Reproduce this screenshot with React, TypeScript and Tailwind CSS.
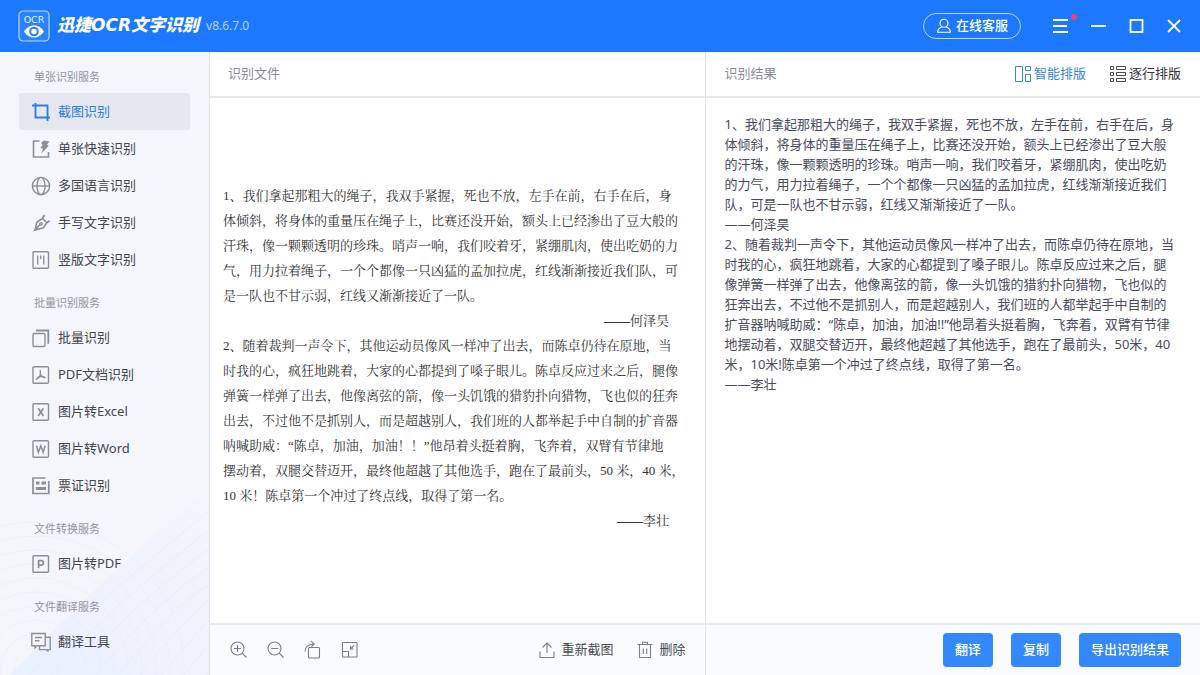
import { useState } from "react";
import type { ReactNode } from "react";

interface NavItem {
  label: string;
  icon: ReactNode;
}

interface NavGroup {
  title: string;
  items: NavItem[];
}

const Icon = ({ children, className = "size-5" }: { children: ReactNode; className?: string }) => (
  <svg
    viewBox="0 0 20 20"
    fill="none"
    stroke="currentColor"
    strokeWidth="1.4"
    className={`shrink-0 ${className}`}
    aria-hidden="true"
  >
    {children}
  </svg>
);

const Page = () => <rect x="2" y="1.7" width="15.5" height="16.6" rx="1" />;

const groups: NavGroup[] = [
  {
    title: "单张识别服务",
    items: [
      {
        label: "截图识别",
        icon: (
          <Icon>
            <path strokeWidth="1.9" d="M1 3.5h15.5v12M4.5 1v14.5H17M16.5 15v4M15 15.5h4" />
          </Icon>
        ),
      },
      {
        label: "单张快速识别",
        icon: (
          <Icon>
            <path d="M8.5 2H2.5v16h15v-5" strokeWidth="1.6" />
            <path fill="currentColor" stroke="none" d="M10.2 3.5 13 1.5l5.5 1-2.600 3 1.800 1.200-7.500 8 1.800-5-2.500-.7 2-3z" />
          </Icon>
        ),
      },
      {
        label: "多国语言识别",
        icon: (
          <Icon>
            <circle cx="10" cy="10" r="8.6" />
            <ellipse cx="10" cy="10" rx="4" ry="8.6" />
            <path d="M1.4 10h17.2" />
          </Icon>
        ),
      },
      {
        label: "手写文字识别",
        icon: (
          <Icon>
            <path d="M4 17 6 9l5.500-3.500 4.200 4.300-3.200 5L4 17l5-5.500" strokeWidth="1.6" />
            <path strokeWidth="1.8" d="m11.500 5.500 2-3.500M15.700 9.800l3-2" />
            <circle cx="10" cy="10.8" r="1.2" />
          </Icon>
        ),
      },
      {
        label: "竖版文字识别",
        icon: (
          <Icon>
            <Page />
            <path d="M6.700 5.500v9M12.800 5.500v9M9.700 5.500v3.500" />
          </Icon>
        ),
      },
    ],
  },
  {
    title: "批量识别服务",
    items: [
      {
        label: "批量识别",
        icon: (
          <Icon>
            <rect x="2" y="5.5" width="12" height="13" rx="1" />
            <path d="M5 2.5h12.3v13.2" strokeWidth="1.8" />
          </Icon>
        ),
      },
      {
        label: "PDF文档识别",
        icon: (
          <Icon>
            <Page />
            <path d="M9.300 5v3.500c0 3-2 5-4.500 5.800M9.300 8.500c.6 2.800 2.600 4 5.400 4.200M6.300 12.400c2.500-1.200 4.600-1.400 7-.8" strokeWidth="1.3" />
          </Icon>
        ),
      },
      {
        label: "图片转Excel",
        icon: (
          <Icon>
            <Page />
            <path d="m7.200 6.300 5.200 7.600M12.400 6.300l-5.200 7.600" strokeWidth="1.7" />
          </Icon>
        ),
      },
      {
        label: "图片转Word",
        icon: (
          <Icon>
            <Page />
            <path d="m5.500 6.700 1.900 6.600 2.400-6.400 2.400 6.400 1.900-6.600" strokeWidth="1.5" />
          </Icon>
        ),
      },
      {
        label: "票证识别",
        icon: (
          <Icon>
            <path d="M14.5 2H2v15.5M1 17.5h17.5M17.8 5v12.5" strokeWidth="1.7" />
            <path d="M5 7h3.500M10.500 7H15M4.800 12.600H15" strokeWidth="3" />
          </Icon>
        ),
      },
    ],
  },
  {
    title: "文件转换服务",
    items: [
      {
        label: "图片转PDF",
        icon: (
          <Icon>
            <Page />
            <path d="M7.600 14.300V6.600h2.600a2.200 2.200 0 0 1 0 4.500H7.600" strokeWidth="1.7" />
          </Icon>
        ),
      },
    ],
  },
  {
    title: "文件翻译服务",
    items: [
      {
        label: "翻译工具",
        icon: (
          <Icon>
            <path d="M.8 1.500h13.400v12.300H6l-2 2v-2H.8zM4 5.500h7M4 8.700h4.500" />
            <path d="M14.200 5.300h5v12.300h-2.400v1.200l-1.600-1.200H8.500v-3.800" />
          </Icon>
        ),
      },
    ],
  },
];

const sourceFirst = [
  "1、我们拿起那粗大的绳子，我双手紧握，死也不放，左手在前，右手在后，身",
  "体倾斜，将身体的重量压在绳子上，比赛还没开始，额头上已经渗出了豆大般的",
  "汗珠，像一颗颗透明的珍珠。哨声一响，我们咬着牙，紧绷肌肉，使出吃奶的力",
  "气，用力拉着绳子，一个个都像一只凶猛的孟加拉虎，红线渐渐接近我们队，可",
  "是一队也不甘示弱，红线又渐渐接近了一队。",
];

const sourceSecond = [
  "2、随着裁判一声令下，其他运动员像风一样冲了出去，而陈卓仍待在原地，当",
  "时我的心，疯狂地跳着，大家的心都提到了嗓子眼儿。陈卓反应过来之后，腿像",
  "弹簧一样弹了出去，他像离弦的箭，像一头饥饿的猎豹扑向猎物，飞也似的狂奔",
  "出去，不过他不是抓别人，而是超越别人，我们班的人都举起手中自制的扩音器",
  "呐喊助威：“陈卓，加油，加油！！”他昂着头挺着胸，飞奔着，双臂有节律地",
  "摆动着，双腿交替迈开，最终他超越了其他选手，跑在了最前头，50 米，40 米，",
  "10 米！陈卓第一个冲过了终点线，取得了第一名。",
];

const resultLines = [
  "1、我们拿起那粗大的绳子，我双手紧握，死也不放，左手在前，右手在后，身",
  "体倾斜，将身体的重量压在绳子上，比赛还没开始，额头上已经渗出了豆大般",
  "的汗珠，像一颗颗透明的珍珠。哨声一响，我们咬着牙，紧绷肌肉，使出吃奶",
  "的力气，用力拉着绳子，一个个都像一只凶猛的孟加拉虎，红线渐渐接近我们",
  "队，可是一队也不甘示弱，红线又渐渐接近了一队。",
  "——何泽昊",
  "2、随着裁判一声令下，其他运动员像风一样冲了出去，而陈卓仍待在原地，当",
  "时我的心，疯狂地跳着，大家的心都提到了嗓子眼儿。陈卓反应过来之后，腿",
  "像弹簧一样弹了出去，他像离弦的箭，像一头饥饿的猎豹扑向猎物，飞也似的",
  "狂奔出去，不过他不是抓别人，而是超越别人，我们班的人都举起手中自制的",
  "扩音器呐喊助威：“陈卓，加油，加油!!”他昂着头挺着胸，飞奔着，双臂有节律",
  "地摆动着，双腿交替迈开，最终他超越了其他选手，跑在了最前头，50米，40",
  "米，10米!陈卓第一个冲过了终点线，取得了第一名。",
  "——李壮",
];

const Lines = ({ lines }: { lines: string[] }) => (
  <>
    {lines.map((line) => (
      <span key={line} className="block whitespace-nowrap">
        {line}
      </span>
    ))}
  </>
);

const TitleBar = () => (
  <header className="flex h-[52px] shrink-0 items-center bg-[#1b78ff] pl-[18px] pr-[19px] text-white">
    <svg viewBox="0 0 32 32" className="size-8 shrink-0" fill="none" aria-hidden="true">
      <rect x="1" y="1" width="30" height="30" rx="4" fill="#2b82ff" stroke="#b9d6ff" strokeWidth="1.2" />
      <text x="16" y="12.5" textAnchor="middle" fontSize="9.5" fill="#e4efff" fontFamily="DejaVu Sans">
        OCR
      </text>
      <path d="M6 21.500c5.500-8.500 14.500-8.500 20 0-5.500 8-14.500 8-20 0z" fill="#fff" />
      <circle cx="16" cy="21.500" r="3.800" stroke="#2b80fa" strokeWidth="2" fill="#fff" />
    </svg>
    <h1 className="ml-[7px] whitespace-nowrap font-['DejaVu_Sans','Noto_Sans_CJK_SC',sans-serif] text-[17px] font-black italic">
      迅捷OCR文字识别
    </h1>
    <span className="ml-[7px] text-xs text-[#b5d3ff]">v8.6.7.0</span>
    <button className="ml-auto flex h-[26px] items-center gap-1 rounded-full border border-[#b9d6ff] px-3 text-[13px] font-medium whitespace-nowrap">
      <Icon className="size-4">
        <circle cx="10" cy="6.500" r="5" />
        <path d="M7.500 11c-3.500 1.500-5.500 3.500-5.500 6.800h16c0-3.300-2-5.300-5.500-6.800" />
      </Icon>
      在线客服
    </button>
    <div className="ml-8 flex items-center gap-[22px]">
      <button aria-label="菜单" className="relative">
        <svg viewBox="0 0 16 16" className="size-4" stroke="currentColor" strokeWidth="1.8">
          <path d="M0 2h15M0 8h14M0 14h15" />
        </svg>
        <span className="absolute -top-1 -right-2 size-1.5 rounded-full bg-[#f5455c]" />
      </button>
      <button aria-label="最小化">
        <svg viewBox="0 0 16 16" className="size-4" stroke="currentColor" strokeWidth="1.8">
          <path d="M0 8h15" />
        </svg>
      </button>
      <button aria-label="最大化">
        <svg viewBox="0 0 16 16" className="size-4" fill="none" stroke="currentColor" strokeWidth="1.8">
          <rect x="1.500" y="2" width="12" height="12" />
        </svg>
      </button>
      <button aria-label="关闭">
        <svg viewBox="0 0 14 14" className="size-3.5" stroke="currentColor" strokeWidth="1.8">
          <path d="m1 1 12 12M13 1 1 13" />
        </svg>
      </button>
    </div>
  </header>
);

const SidebarWaves = () => (
  <svg
    viewBox="0 0 209 200"
    preserveAspectRatio="none"
    className="absolute bottom-0 left-0 h-[200px] w-full"
    fill="none"
    stroke="#e9edf7"
    aria-hidden="true"
  >
    <defs>
      <linearGradient id="slope" x1="0" y1="1" x2="1" y2="0">
        <stop offset="0" stopColor="#e9f0ff" />
        <stop offset="1" stopColor="#f3f5fb" />
      </linearGradient>
    </defs>
    <path d="M10 200C60 150 120 85 209 15V200z" fill="url(#slope)" stroke="none" />
    {[0, 1, 2, 3, 4, 5, 6, 7, 8].map((i) => (
      <path key={i} d={`M${30 + i * 22} 200C${70 + i * 22} 150 ${120 + i * 20} 110 209 ${36 + i * 19}`} />
    ))}
    {[22, 36, 50, 64, 78, 92, 106, 120, 134, 148].map((r) => (
      <ellipse key={r} cx="36" cy="195" rx={r} ry={r} opacity="0.6" />
    ))}
  </svg>
);

const Sidebar = () => {
  const [active, setActive] = useState("截图识别");

  return (
    <aside className="relative w-[210px] shrink-0 border-r border-[#e2e3e9] bg-[#f4f6fb]">
      <SidebarWaves />
      <nav className="relative flex flex-col gap-[17px] px-[19px] pt-[17px]">
        {groups.map((group) => (
          <section key={group.title}>
            <h2 className="mb-2 pl-[15px] text-[11px] leading-4 text-[#92939f]">{group.title}</h2>
            {group.items.map((item) => (
              <button
                key={item.label}
                onClick={() => setActive(item.label)}
                className={`flex h-[37px] w-full items-center gap-[7px] rounded-[3px] px-3 text-[13px] ${
                  active === item.label ? "bg-[#e4e6f0] text-[#2f80e0]" : "text-[#444550]"
                }`}
              >
                <span className={active === item.label ? "text-[#2f80e0]" : "text-[#8d8e9b]"}>{item.icon}</span>
                {item.label}
              </button>
            ))}
          </section>
        ))}
      </nav>
    </aside>
  );
};

const SourcePane = () => (
  <section className="flex min-w-0 flex-1 flex-col">
    <div className="flex h-[46px] shrink-0 items-center border-b-2 border-[#e8e9ec] px-[18px]">
      <h2 className="text-[13px] text-[#8b8c95]">识别文件</h2>
    </div>
    <div className="flex-1 overflow-hidden px-[13px] pt-[85px]">
      <div className="w-[446px] font-['Liberation_Serif','Noto_Serif_CJK_SC','Noto_Sans_CJK_SC',serif] text-[13px] leading-[25px] text-[#333]">
        <p>
          <Lines lines={sourceFirst} />
        </p>
        <p className="text-right">
          <span className="font-bold">——</span>何泽昊
        </p>
        <p>
          <Lines lines={sourceSecond} />
        </p>
        <p className="text-right">
          <span className="font-bold">——</span>李壮
        </p>
      </div>
    </div>
    <div className="flex h-[52px] shrink-0 items-center border-t-2 border-[#e8e9ec] bg-[#fafbfd] px-[19px] text-[#7c7d88]">
      <div className="flex items-center gap-[17px]">
        <button aria-label="放大">
          <Icon>
            <circle cx="8.500" cy="8.500" r="6.500" strokeWidth="1.1" />
            <path d="M5 8.500h7M8.500 5v7M13.200 13.200 17.500 17.500" strokeWidth="1.2" />
          </Icon>
        </button>
        <button aria-label="缩小">
          <Icon>
            <circle cx="8.500" cy="8.500" r="6.500" strokeWidth="1.1" />
            <path d="M5 8.500h7M13.200 13.200 17.500 17.500" strokeWidth="1.2" />
          </Icon>
        </button>
        <button aria-label="旋转">
          <Icon>
            <rect x="5.500" y="7.500" width="11" height="10.500" rx="1" strokeWidth="1.1" />
            <path d="M2 11.500C2 7 4.500 4.500 11 4M8 1.200l3.200 2.800L8.500 6.700" strokeWidth="1.1" />
          </Icon>
        </button>
        <button aria-label="适应窗口">
          <Icon>
            <rect x="2.500" y="2.500" width="14.500" height="14.500" rx="0.500" strokeWidth="1.1" />
            <path d="M2.500 11.500h6V17M14 5.500 10.500 9M10.500 5.800V9h3.200" strokeWidth="1.1" />
          </Icon>
        </button>
      </div>
      <div className="ml-auto flex items-center gap-[22px] text-[13px]">
        <button className="flex items-center gap-1">
          <Icon>
            <path d="M3 11.500v6h14v-6M10 13V3M5.500 7.500 10 3l4.500 4.500" strokeWidth="1.1" />
          </Icon>
          <span className="text-[#4b4c58]">重新截图</span>
        </button>
        <button className="flex items-center gap-1">
          <Icon>
            <path d="M2.500 4.500h15M7.500 4.500V2.300h5v2.200M4.500 4.500v13h11v-13M8.300 8.500V14M11.700 8.500V14" strokeWidth="1.1" />
          </Icon>
          <span className="text-[#4b4c58]">删除</span>
        </button>
      </div>
    </div>
  </section>
);

const ResultPane = () => {
  const [smart, setSmart] = useState(true);

  return (
    <section className="flex min-w-0 flex-1 flex-col border-l border-[#e2e3e9]">
      <div className="flex h-[46px] shrink-0 items-center border-b-2 border-[#e8e9ec] px-[19px]">
        <h2 className="text-[13px] text-[#8b8c95]">识别结果</h2>
        <div className="ml-auto flex items-center gap-6 text-[13px]">
          <button
            onClick={() => setSmart(true)}
            className={`flex items-center gap-[3px] ${smart ? "text-[#3a85d8]" : "text-[#444550]"}`}
          >
            <svg viewBox="0 0 16 16" className="size-4" fill="none" stroke="currentColor" aria-hidden="true">
              <path d="M.5.500h7v15h-7zM10.500.500h5v4h-5zM10.500 8.500h5v7h-5z" />
            </svg>
            智能排版
          </button>
          <button
            onClick={() => setSmart(false)}
            className={`flex items-center gap-[3px] ${smart ? "text-[#33343d]" : "text-[#3a85d8]"}`}
          >
            <svg viewBox="0 0 16 16" className="size-4" fill="none" stroke="currentColor" strokeWidth="0.9" aria-hidden="true">
              <path d="M.5.500h3v3h-3zM.5 6.500h3v3h-3zM.5 12.500h3v3h-3zM6.500.500h9v3h-9zM6.500 6.500h9v3h-9zM6.500 12.500h9v3h-9z" />
            </svg>
            逐行排版
          </button>
        </div>
      </div>
      <div className="flex-1 overflow-hidden px-[19px] pt-4">
        <p className="text-[13px] leading-5 text-[#4a4b5c]">
          <Lines lines={resultLines} />
        </p>
      </div>
      <div className="flex h-[52px] shrink-0 items-center justify-end gap-[18px] border-t-2 border-[#e8e9ec] bg-[#fafbfd] px-[19px] text-[13px] font-medium text-white">
        <button className="h-[34px] rounded bg-[#3388fb] px-3">翻译</button>
        <button className="h-[34px] rounded bg-[#3388fb] px-3">复制</button>
        <button className="h-[34px] rounded bg-[#3388fb] px-3">导出识别结果</button>
      </div>
    </section>
  );
};

const App = () => (
  <div className="flex min-h-screen flex-col bg-white font-['Noto_Sans','Noto_Sans_CJK_SC',sans-serif]">
    <TitleBar />
    <main className="flex flex-1">
      <Sidebar />
      <SourcePane />
      <ResultPane />
    </main>
  </div>
);

export default App;
